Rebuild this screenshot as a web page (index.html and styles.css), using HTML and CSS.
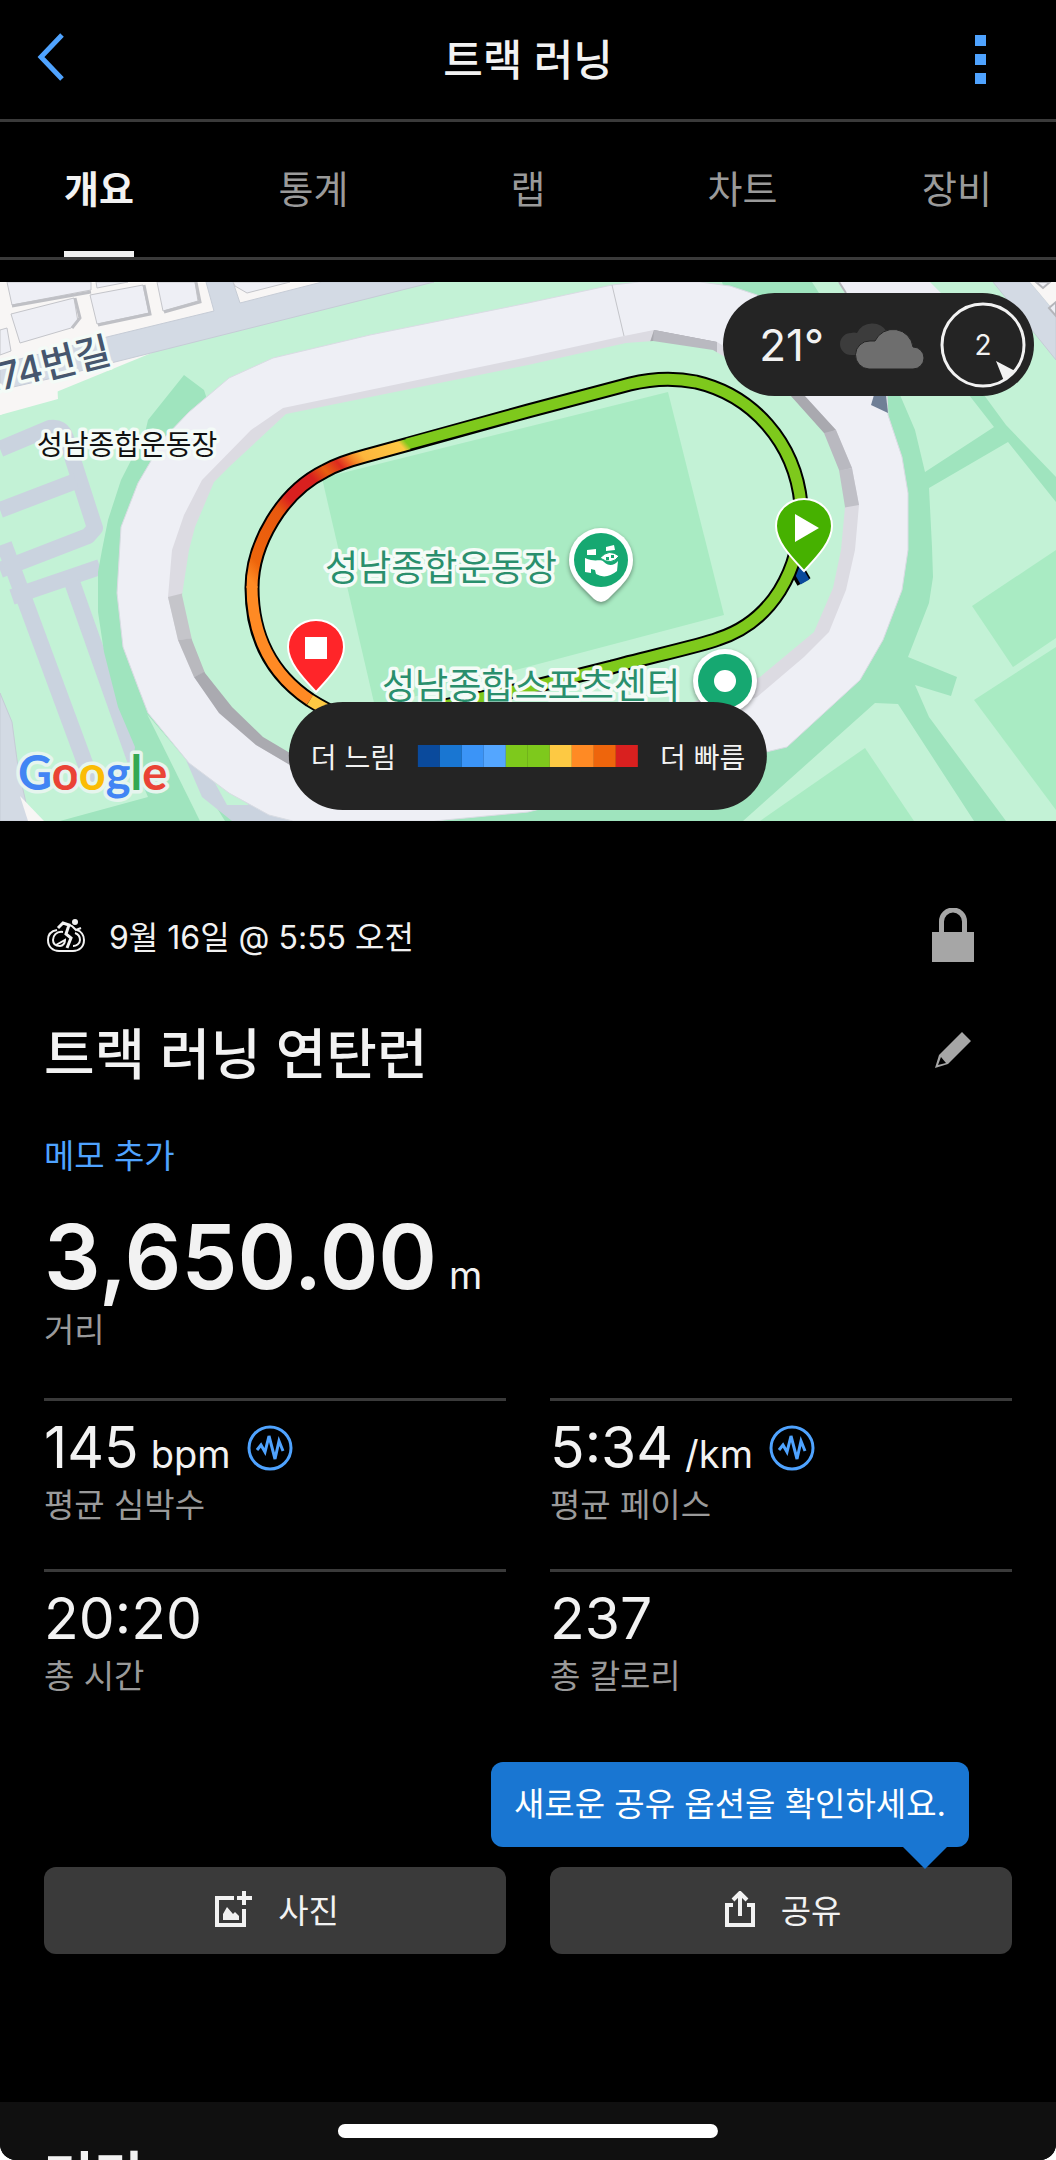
FILE: index.html
```html
<!DOCTYPE html>
<html lang="ko">
<head>
    <meta charset="UTF-8">
    <meta name="viewport" content="width=device-width, initial-scale=1.0">
    <title>트랙 러닝</title>
    <link rel="stylesheet" href="styles.css">
</head>
<body>
    <div class="app">
        <!-- Top bar -->
        <header class="topbar">
            <button class="icon-btn" aria-label="뒤로">
                <svg width="28" height="54" viewBox="0 0 28 54"><path d="M25 2 4 24 25 46" fill="none" stroke="#4fa3ff" stroke-width="5"/></svg>
            </button>
            <h1>트랙 러닝</h1>
            <button class="icon-btn" aria-label="더보기">
                <svg width="11" height="50" viewBox="0 0 11 50" fill="#4fa3ff"><path d="M0 0h11v11H0zM0 19h11v11H0zM0 38h11v11H0z"/></svg>
            </button>
        </header>

        <!-- Tabs -->
        <nav class="tabs">
            <a href="#overview" class="active">개요</a>
            <a href="#stats">통계</a>
            <a href="#laps">랩</a>
            <a href="#charts">차트</a>
            <a href="#gear">장비</a>
        </nav>

        <!-- Map -->
        <div class="map">
            <svg class="map-canvas" viewBox="0 0 1056 539">
                <defs>
                    <linearGradient id="heat" gradientUnits="userSpaceOnUse" x1="407" y1="161" x2="252" y2="300">
                        <stop offset="0" stop-color="#7ec91c"/>
                        <stop offset=".03" stop-color="#fdc943"/>
                        <stop offset=".2" stop-color="#fdb53c"/>
                        <stop offset=".25" stop-color="#f58324"/>
                        <stop offset=".31" stop-color="#dd2a1f"/>
                        <stop offset=".38" stop-color="#e8600f"/>
                        <stop offset=".45" stop-color="#d9201f"/>
                        <stop offset=".6" stop-color="#d9201f"/>
                        <stop offset=".67" stop-color="#e8580f"/>
                        <stop offset=".92" stop-color="#ee650c"/>
                        <stop offset="1" stop-color="#ff8a24"/>
                    </linearGradient>
                </defs>
                <rect width="1056" height="539" fill="#c3f2d6"/>

                <!-- city blocks -->
                <path d="M0 0H325L0 133z" fill="#f8f6f5"/>
                <path d="M0 133V95L56 82 58 117z" fill="#f8f6f5"/>
                <path d="M0 82 111 54 214 29 206 0H233L240 21 322 0H434L115 80 57 95 0 108z" fill="#d3dae4" stroke="#c6ccd6"/>
                <g fill="#eeeff5" stroke="#c4c5ca">
                    <path d="M7 0 12 23 91 8V0z"/>
                    <path d="M11 32 74 16 78 40 71 46 20 61z"/>
                    <path d="M90 13 143 3 149 31 97 42z"/>
                    <path d="M96 0 97 6 128 0z"/>
                    <path d="M157 0 163 29 198 19 195 0z"/>
                    <path d="M0 48 7 46 11 69 0 73z"/>
                    <path d="M233 0 235 4 247 11 290 0z"/>
                </g>
                <path d="M75 16 80 36 72 46M144 3 150 32 98 43M196 0 200 20 164 30M12 24 91 10" fill="none" stroke="#bfc0c5" stroke-width="3"/>

                <!-- parking lot lanes -->
                <g fill="none" stroke="#cad3df" stroke-width="16" stroke-linejoin="round">
                    <path d="M0 167 50 146Q62 144 66 156L95 246 88 254 0 288"/>
                    <path d="M0 228 76 199"/>
                    <path d="M4 262 92 500"/>
                    <path d="M12 315 100 285"/>
                    <path d="M72 300 135 478"/>
                </g>
                <path d="M0 411 12 440 18 485 30 539H0z" fill="#d3dae4" stroke="#c6ccd6"/>
                <path d="M20 514 44 539H28z" fill="#f8f6f5"/>

                <!-- paths around the stadium -->
                <g fill="#9fe4be">
                    <path d="M184 93 204 108 300 400 330 539H60L148 515 133 480 135 465 118 425 104 370 98 330V290L102 268 108 238 121 198 145 151 148 138z"/>
                    <path d="M722 0H812L850 60H740z"/>
                    <path d="M800 113H900L915 148 925 190 994 145 969 113H984L1006 143 1056 195V220L1008 160 929 206 932 265 933 295 929 321 908 375 957 395 951 414 915 403 929 435 1006 539H974L898 422 875 421 743 539H434L528 530 766 470 830 350z"/>
                </g>
                <path d="M147 432 189 481 225 539H200Z" fill="#c3f2d6"/>
                <path d="M186 478 229 505 300 539H232L202 515z" fill="#cad3df"/>
                <path d="M209 490 229 508 249 523H227z" fill="#c3f2d6"/>
                <g fill="#a9ebc3">
                    <path d="M865 466 914 539H760z"/>
                    <path d="M972 324 1056 268V356L1013 385z"/>
                    <path d="M974 418 1056 365V528z"/>
                </g>
                <path d="M993 0H1030L1056 31V78z" fill="#d3dae4" stroke="#c6ccd6"/>
                <path d="M1030 0H1056V31z" fill="#f8f6f5"/>
                <path d="M1036 0 1043 6 1050 0zM1049 26 1056 20V34z" fill="#eeeff5" stroke="#b4b5ba" stroke-width="2"/>
                <path d="M839 0H930L945 15 887 113H800L845 11z" fill="#eeeff5"/>
                <path d="M839 0 846 11" stroke="#b4b5ba" stroke-width="2"/>

                <!-- stadium roof -->
                <path d="M528 21 370 53 273 76 229 96 189 130 165 155 138 201 121 245 117 311 123 365 138 405 148 431 189 481 229 511 269 533 293 539H434L528 530 766 470 787 465 860 398 883 358 902 308 908 268V211L902 175 888 133 887 113 830 50 757 13 730 4 700 0H639L612 3z" fill="#eeeff5" stroke="#d9dce3"/>
                <path d="M528 75 283 126 251 148 202 198 184 233 172 268 168 315 178 358 194 395 219 431 256 463 290 483 400 500 640 460 757 415 804 375 829 350 846 308 855 268 859 223 852 186 836 148 804 113 717 60 654 48 624 54z" fill="#dcdbe2"/>
                <path d="M804 113 836 148 820 154 780 113zM717 60 654 48 650 60 717 72z" fill="#a9a9af"/>
                <path d="M836 148 852 186 836 190 820 152zM654 48 717 60V72L653 60z" fill="#b9b9c0"/>
                <path d="M852 186 859 223 842 226 836 189z" fill="#c0c0c7"/>
                <path d="M168 315 178 358 196 356 184 311z" fill="#c5c5ca"/>
                <path d="M178 358 194 395 210 388 194 356z" fill="#b9b9be"/>
                <path d="M194 395 219 431 256 463 290 483V470L235 420 208 388z" fill="#aaaab0"/>
                <path d="M528 83 286 132 229 185 214 200 195 245 189 268 182 313 192 358 205 391 232 425 263 455 290 471 400 480 640 440 760 395 814 350 833 306 841 268 845 225 839 188 824 151 790 113 713 68 653 59 626 61z" fill="#c3f2d6"/>
                <path d="M612 3 624 54" stroke="#c4c5ca"/>
                <path d="M871 123 888 131 886 113H874z" fill="#6f7f96"/>
                <path d="M322 196 668 110 724 333 375 425z" fill="#a9ebc3"/>

                <!-- route -->
                <g fill="none">
                    <path d="M796 286 804 300" stroke="#000" stroke-width="15"/>
                    <path d="M797 286 805 300" stroke="#0a4a9c" stroke-width="10"/>
                    <path d="M340 434C326 428 318 423 310 418 270 391 252 352 252 306 252 262 282 210 325 189 337 182 350 178 365 174L409 162 528 129 630 102C650 97 672 95 696 100 752 113 795 160 801 222 803 290 770 340 718 357 700 364 640 377 612 385L528 406 440 425" stroke="#000" stroke-width="15"/>
                    <path d="M407 162 528 129 630 102C650 97 672 95 696 100 752 113 795 160 801 222 803 290 770 340 718 357 700 364 640 377 612 385L528 406 440 425" stroke="#7ec91c" stroke-width="11"/>
                    <path d="M252 306C252 262 282 210 325 189 337 182 350 178 365 174L409 162" stroke="url(#heat)" stroke-width="11"/>
                    <path d="M310 418C270 391 252 352 252 304" stroke="#ff8a24" stroke-width="11"/>
                    <path d="M340 434C326 428 318 423 310 418" stroke="#fdc943" stroke-width="11"/>
                </g>

                <!-- labels -->
                <text class="label road" transform="translate(-32 117) rotate(-14)">로74번길</text>
                <text class="label place" x="37" y="173">성남종합운동장</text>
                <text class="label poi" x="325" y="299">성남종합운동장</text>
                <text class="label poi" x="382" y="417">성남종합스포츠센터</text>
                <text class="label google" x="18" y="508"><tspan fill="#4285f4">G</tspan><tspan fill="#ea4335">o</tspan><tspan fill="#fbbc05">o</tspan><tspan fill="#4285f4">g</tspan><tspan fill="#34a853">l</tspan><tspan fill="#ea4335">e</tspan></text>

                <!-- place pins -->
                <g class="pin">
                    <path d="M601 246a32 32 0 0 1 32 32c0 13-7 21-16 30l-9 9q-7 6-14 0l-9-9c-9-9-16-17-16-30a32 32 0 0 1 32-32z" fill="#fff"/>
                    <circle cx="601" cy="278" r="27" fill="#16a871"/>
                    <path d="M587 268 596 267V273H587zM606 265 614 263 615 268 606 269z" fill="#fff"/>
                    <path d="M585 276C596 281 600 276 604 280 608 284 614 284 618 279L617 289Q606 298 596 292L595 288 591 287V291L585 290z" fill="#fff"/>
                    <path d="M600 276Q609 266 619 274 612 284 600 276z" fill="#fff" stroke="#16a871"/>
                    <path d="M606 275h3v3h-3zM611 273h3v3h-3z" fill="#16a871"/>
                </g>
                <g class="pin">
                    <circle cx="725" cy="399" r="32" fill="#fff"/>
                    <circle cx="725" cy="399" r="27" fill="#16a871"/>
                    <circle cx="725" cy="399" r="11" fill="#fff"/>
                </g>

                <!-- start and finish -->
                <g stroke="#fff" stroke-width="2">
                    <path d="M804 217c16 0 28 12 28 27 0 16-16 32-28 45-12-13-28-29-28-45 0-15 12-27 28-27z" fill="#46b100"/>
                    <path d="M316 338c16 0 28 12 28 27 0 16-16 32-28 45-12-13-28-29-28-45 0-15 12-27 28-27z" fill="#ff2529"/>
                </g>
                <path d="M795 232 819 246 795 260zM305 355H327V377H305z" fill="#fff"/>
            </svg>

            <div class="weather">
                <span class="temp">21°</span>
                <svg width="84" height="48" viewBox="0 0 84 48">
                    <path d="M11 34A11 11 0 0 1 11 12Q14 11 17 12A17 17 0 0 1 47 11L40 34z" fill="#3c3c3c"/>
                    <path d="M29 48A14 14 0 0 1 30 20H35A20 20 0 0 1 73 26A11 11 0 0 1 73 48z" fill="#6e6e6e" stroke="#242424" stroke-width="1"/>
                </svg>
                <div class="wind">
                    <span>2</span>
                    <svg width="86" height="86" viewBox="0 0 86 86"><circle cx="43" cy="43" r="41" fill="none" stroke="#f2f2f2" stroke-width="3"/><path d="M56 59 75 69 64 79z" fill="#f2f2f2"/></svg>
                </div>
            </div>

            <div class="legend">
                <span>더 느림</span>
                <div class="scale">
                    <i class="s1"></i><i class="s2"></i><i class="s3"></i><i class="s4"></i><i class="s5"></i><i class="s5"></i><i class="s6"></i><i class="s7"></i><i class="s8"></i><i class="s9"></i>
                </div>
                <span>더 빠름</span>
            </div>
        </div>

        <!-- Activity summary -->
        <main class="details" id="overview">
            <div class="row date-row">
                <svg width="38" height="34" viewBox="0 0 38 34" fill="none" stroke="#f2f2f2" stroke-width="2">
                    <path d="M10 12C4 13 1 17 1 22 1 29 6 33 12 33H26C32 33 37 29 37 22 37 17 34 13 30 12"/>
                    <path d="M16 14C9 13 6 18 6 22 6 26 9 28 13 28 16 28 18 25 18 22L9 27"/>
                    <path d="M28 15C31 16 33 18 33 22 33 26 29 28 26 28"/>
                    <path d="M11 10 16 5 22 7 19 16 24 20 20 30" stroke-width="3"/>
                    <path d="M22 7 25 8 29 12 34 10"/>
                    <circle cx="28" cy="4" r="3" fill="#f2f2f2" stroke="none"/>
                </svg>
                <time>9월 16일 @ 5:55 오전</time>
                <button class="icon-btn" aria-label="공개 범위">
                    <svg width="42" height="54" viewBox="0 0 42 54"><path d="M0 24H42V54H0z" fill="#a6a6a6"/><path d="M9.500 25V13.500a11.500 11.500 0 0 1 23 0V25" fill="none" stroke="#a6a6a6" stroke-width="5"/></svg>
                </button>
            </div>
            <div class="row title-row">
                <h2>트랙 러닝 연탄런</h2>
                <button class="icon-btn" aria-label="이름 편집">
                    <svg width="42" height="36" viewBox="0 0 42 36"><path d="M30 0 39 9 16 32 3 36 7 23zM9 25 6 33 14 31z" fill="#a6a6a6" fill-rule="evenodd"/></svg>
                </button>
            </div>
            <a href="#note" class="note">메모 추가</a>

            <div class="distance"><strong>3,650.00</strong><span class="unit">m</span></div>
            <div class="caption">거리</div>

            <div class="stats">
                <div class="stat">
                    <div class="value">145<span class="unit">bpm</span>
                        <svg width="46" height="46" viewBox="0 0 46 46" fill="none" stroke="#4fa3ff" stroke-width="3"><circle cx="23" cy="23" r="21"/><path d="M10 25 14 20 18 27 22 11 28 34 32 16 36 26"/></svg>
                    </div>
                    <div class="caption">평균 심박수</div>
                </div>
                <div class="stat">
                    <div class="value">5:34<span class="unit">/km</span>
                        <svg width="46" height="46" viewBox="0 0 46 46" fill="none" stroke="#4fa3ff" stroke-width="3"><circle cx="23" cy="23" r="21"/><path d="M10 25 14 20 18 27 22 11 28 34 32 16 36 26"/></svg>
                    </div>
                    <div class="caption">평균 페이스</div>
                </div>
                <div class="stat">
                    <div class="value">20:20</div>
                    <div class="caption">총 시간</div>
                </div>
                <div class="stat">
                    <div class="value">237</div>
                    <div class="caption">총 칼로리</div>
                </div>
            </div>

            <div class="actions">
                <button>
                    <svg width="37" height="36" viewBox="0 0 37 36"><path d="M19 7H2V34H29V18" fill="none" stroke="#f2f2f2" stroke-width="4"/><path d="M29 0V14M22 7H37" stroke="#f2f2f2" stroke-width="4"/><path d="M8 29V23L12 16 18 23 20 21 24 25V29z" fill="#f2f2f2"/></svg>
                    사진
                </button>
                <button>
                    <svg width="30" height="36" viewBox="0 0 30 36" fill="none" stroke="#f2f2f2" stroke-width="4"><path d="M8 14H2V34H28V14H22"/><path d="M15 25V3M8 9 15 2 22 9"/></svg>
                    공유
                </button>
                <div class="tooltip">새로운 공유 옵션을 확인하세요.</div>
            </div>
        </main>

        <section class="next-card">
            <h2>거리</h2>
        </section>
        <div class="home-bar"></div>
    </div>
</body>
</html>
```
FILE: styles.css
```css
* {
    box-sizing: border-box;
}

body {
    font-family: "Inter", "Noto Sans CJK KR", sans-serif;
    background: #fff;
    color: #f2f2f2;
    margin: 0;
}

.app {
    position: relative;
    display: flex;
    flex-direction: column;
    height: 100vh;
    background: #000;
    border-radius: 0 0 16px 16px;
    overflow: hidden;
}

h1, h2 {
    margin: 0;
    font-weight: 500;
}

button {
    font-family: inherit;
    color: inherit;
    border: none;
    cursor: pointer;
}

svg {
    display: block;
}

.icon-btn {
    background: none;
    padding: 0;
}

/* Top bar */
.topbar {
    display: grid;
    grid-template-columns: 1fr auto 1fr;
    flex-shrink: 0;
    align-items: center;
    height: 122px;
    padding: 0 70px 0 37px;
    border-bottom: 3px solid #3a3a3a;
}

.topbar {
    display: flex;
    justify-content: space-between;
    padding: 0 70px 0 37px;
}

.topbar h1 {
    font-size: 43px;
    line-height: 60px;
}

.topbar .icon-btn {
    display: flex;
    width: 61px;
}

.topbar .icon-btn:last-child {
    width: 28px;
    justify-content: flex-end;
}

/* Tabs */
.tabs {
    display: flex;
    flex-shrink: 0;
    justify-content: space-between;
    height: 138px;
    padding: 0 64px;
    border-bottom: 3px solid #3a3a3a;
}

.tabs a {
    min-width: 70px;
    border-bottom: 6px solid transparent;
    color: #9a9a9a;
    font-size: 38px;
    line-height: 134px;
    text-align: center;
    text-decoration: none;
}

.tabs a.active {
    border-color: #f2f2f2;
    color: #f2f2f2;
    font-weight: 700;
}

/* Map */
.map {
    position: relative;
    flex-shrink: 0;
    margin-top: 22px;
}

.map-canvas {
    width: 100%;
}

.label {
    stroke: #f4fbf7;
    stroke-width: 7px;
    stroke-linejoin: round;
    paint-order: stroke;
}

.label.road {
    fill: #46566e;
    font-size: 38px;
    font-weight: 500;
}

.label.place {
    fill: #111;
    font-size: 28px;
}

.label.poi {
    fill: #2a8f6d;
    font-size: 36px;
}

.label.google {
    font-family: "Lato", sans-serif;
    font-size: 47px;
    font-weight: 700;
    stroke: #e6f5ee;
}

.pin {
    filter: drop-shadow(0 2px 2px rgba(0, 0, 0, 0.4));
}

.weather {
    position: absolute;
    top: 11px;
    right: 22px;
    display: flex;
    align-items: center;
    gap: 16px;
    height: 103px;
    padding: 0 8px 0 36px;
    border-radius: 52px;
    background: #242424;
}

.temp {
    font-size: 44px;
}

.wind {
    position: relative;
    font-size: 28px;
}

.wind span {
    position: absolute;
    inset: 0;
    line-height: 86px;
    text-align: center;
}

.legend {
    position: absolute;
    bottom: 11px;
    left: 50%;
    transform: translateX(-50%);
    display: flex;
    align-items: center;
    gap: 22px;
    height: 108px;
    padding: 0 22px;
    border-radius: 54px;
    background: #242424;
    font-size: 28px;
    white-space: nowrap;
}

.scale {
    display: flex;
}

.scale i {
    width: 22px;
    height: 22px;
}

.s1 { background: #0a4a9c; }
.s2 { background: #1976d2; }
.s3 { background: #3b94f7; }
.s4 { background: #54a6ff; }
.s5 { background: #7ec91c; }
.s6 { background: #fdc943; }
.s7 { background: #ff8a24; }
.s8 { background: #ee650c; }
.s9 { background: #d9201f; }

/* Summary */
.details {
    flex-shrink: 0;
    padding: 87px 44px 148px;
}

.row {
    display: flex;
    align-items: center;
    padding-right: 38px;
}

.row .icon-btn {
    margin-left: auto;
}

.date-row {
    gap: 24px;
    height: 54px;
    padding-left: 3px;
    font-size: 32px;
}

.title-row {
    height: 80px;
    margin: 48px 0 42px;
}

.title-row h2 {
    font-size: 55px;
}

.note {
    display: block;
    color: #4fa3ff;
    font-size: 33px;
    line-height: 48px;
    text-decoration: none;
}

.distance {
    display: flex;
    align-items: baseline;
    gap: 12px;
    margin-top: 26px;
}

.distance strong {
    font-size: 89px;
    font-weight: 600;
    line-height: 102px;
}

.unit {
    font-size: 38px;
    line-height: 1;
}

.caption {
    color: #9a9a9a;
    font-size: 33px;
    line-height: 44px;
}

.stats {
    display: grid;
    grid-template-columns: 1fr 1fr;
    column-gap: 44px;
    margin-top: 46px;
}

.stat {
    padding: 12px 0 42px;
    border-top: 3px solid #3a3a3a;
}

.value {
    display: flex;
    align-items: baseline;
    gap: 12px;
    font-size: 57px;
    line-height: 70px;
}

.value svg {
    align-self: center;
    margin-left: 4px;
}

.actions {
    position: relative;
    display: grid;
    grid-template-columns: 1fr 1fr;
    gap: 44px;
    margin-top: 127px;
}

.actions button {
    display: flex;
    justify-content: center;
    align-items: center;
    gap: 26px;
    height: 87px;
    padding: 0 0 4px 4px;
    border-radius: 12px;
    background: #3a3a3a;
    font-size: 33px;
}

.tooltip {
    position: absolute;
    right: 43px;
    bottom: 107px;
    padding: 0 23px;
    border-radius: 12px;
    background: #1976d2;
    color: #fff;
    font-size: 33px;
    line-height: 85px;
    white-space: nowrap;
}

.tooltip::after {
    content: "";
    position: absolute;
    top: 100%;
    right: 22px;
    border: 22px solid transparent;
    border-top-color: #1976d2;
    border-bottom: none;
}

/* Next card, cut off by the screen edge */
.next-card {
    flex: 1;
    min-height: 0;
    padding: 46px 44px 0;
    background: #101010;
    overflow: hidden;
}

.next-card h2 {
    font-size: 54px;
    font-weight: 700;
    line-height: 60px;
}

.home-bar {
    position: absolute;
    bottom: 22px;
    left: 50%;
    transform: translateX(-50%);
    width: 36%;
    height: 14px;
    border-radius: 7px;
    background: #fff;
}
```
